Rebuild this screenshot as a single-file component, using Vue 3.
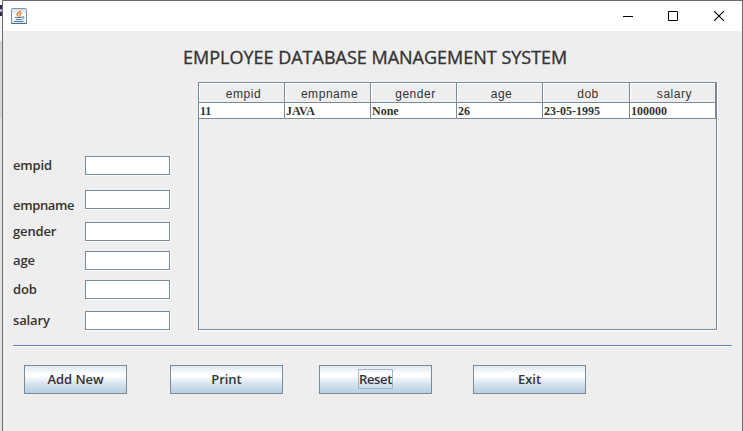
<script setup>
const columns = ['empid', 'empname', 'gender', 'age', 'dob', 'salary']
const record = ['11', 'JAVA', 'None', '26', '23-05-1995', '100000']
const buttons = ['Add New', 'Print', 'Reset', 'Exit']
</script>

<template>
  <div class="desktop">
    <div class="behind"><i class="dark"></i><i class="lilac"></i><i class="dark two"></i></div>
    <div class="window">
      <header class="titlebar">
        <svg class="java" width="16" height="16" viewBox="0 0 16 16">
          <defs>
            <linearGradient id="tile" x1="0" y1="0" x2="0" y2="1">
              <stop offset="0" stop-color="#d3dde3" />
              <stop offset=".5" stop-color="#ffffff" />
              <stop offset="1" stop-color="#dce6ec" />
            </linearGradient>
          </defs>
          <rect x=".5" y=".5" width="15" height="15" rx="1" fill="url(#tile)" stroke="#7894a6" />
          <path d="M.5 14.500v1h15v-1" fill="none" stroke="#456a82" />
          <path d="M9.500 2.400C9.800 4 6 4.700 6 6.400c0 1 1.200 1.400 1.300 2.300M10.600 4.800C8.800 5.400 8 6.200 9 7.200c.4.500.1 1-.4 1.500" fill="none" stroke="#ee8130" stroke-width="1.400" />
          <path d="M4 9.500h7M5 11.500h5.500M3 13.500h9.500" fill="none" stroke="#4f7c9b" />
          <path d="M11 8.800c2.600-.7 2.800 1.600.3 2.400" fill="none" stroke="#4f7c9b" />
        </svg>
        <div class="controls">
          <svg width="10" height="10"><path d="M0 5.500h10" stroke="#000" /></svg>
          <svg width="10" height="10"><path d="M.5.500h9v9h-9z" fill="none" stroke="#000" /></svg>
          <svg class="close" width="10" height="10"><path d="M0 0l10 10M10 0L0 10" stroke="#000" stroke-width="1.100" /></svg>
        </div>
      </header>
      <h1><span>EMPLOYEE DATABASE MANAGEMENT SYSTEM</span></h1>
      <main>
        <form class="fields" @submit.prevent>
          <template v-for="c in columns" :key="c">
            <label :for="c" :class="'l-' + c"><span>{{ c }}</span></label>
            <input :id="c" type="text" />
          </template>
        </form>
        <section class="pane">
          <div class="grid head">
            <div v-for="c in columns" :key="c" class="cell"><span>{{ c }}</span></div>
          </div>
          <div class="grid row">
            <div v-for="v in record" :key="v" class="cell"><span>{{ v }}</span></div>
          </div>
        </section>
      </main>
      <div class="rule"></div>
      <footer>
        <button v-for="b in buttons" :key="b" type="button" :class="'b-' + b.slice(0, 3).toLowerCase()"><span>{{ b }}</span></button>
      </footer>
    </div>
  </div>
</template>

<style>
body { margin: 0; overflow: hidden; }
</style>

<style scoped>
* { box-sizing: border-box; }
.desktop { display: flex; width: 743px; height: 431px; overflow: hidden; font-family: "Open Sans", "Noto Sans", sans-serif; color: #333; }
.behind { width: 2px; padding-top: 5px; background: linear-gradient(#f4f4f4 0 41px, #d2d2d2 41px 42px, #d6d6d6 42px 118px, #e4e4e4 118px); }
.behind i { display: block; width: 2px; height: 4px; }
.dark { background: #33264c; }
.behind .lilac { background: #b5b4ce; height: 3px; }
.window { width: 741px; height: 431px; border: 1px solid #6c6c6c; border-bottom: 0; background: #eee; }
.titlebar { display: flex; align-items: center; justify-content: space-between; height: 30px; padding: 0 18px 0 8px; background: #fff; }
.java { display: block; }
.controls { display: flex; gap: 35px; }
.controls svg { display: block; }
.controls .close { margin-left: 1px; }
h1 { display: flex; height: 51px; margin: 0; padding: 13px 0 0 180px; font-size: 18px; line-height: 27px; font-weight: 500; white-space: nowrap; -webkit-text-stroke: .35px #333; }
main { display: flex; height: 249px; padding-left: 10px; }
.fields { display: grid; grid-template-columns: 72px 86px; grid-template-rows: 34px 32px 29px 29px 31px 20px; width: 185px; margin: 0; padding-top: 74px; align-items: start; }
label { display: block; height: 19px; font-size: 13px; line-height: 18px; font-weight: 600; letter-spacing: -.15px; white-space: nowrap; }
.l-empname { padding-top: 6px; letter-spacing: -.35px; }
input { width: 86px; height: 20px; padding: 0; margin: 0; outline: 0; border: 0; border-radius: 0; background: #fff; box-shadow: inset -1px -1px #fff, inset 1px 1px #7a8a99, inset -2px -2px #7a8a99; }
.pane { width: 520px; height: 249px; box-shadow: inset -1px -1px #fff, inset 1px 1px #7a8a99, inset -2px -2px #7a8a99; padding: 1px 2px 0 1px; }
.grid { display: grid; grid-template-columns: 86px 86px 86px 86px 87px 86px; }
.cell { border-right: 1px solid #7a8a99; border-bottom: 1px solid #7a8a99; white-space: nowrap; }
.head .cell { height: 20px; padding-left: 4px; text-align: center; font: 12px/22px "Liberation Sans", Arial, sans-serif; letter-spacing: .55px; box-shadow: inset 1px 1px #fff; }
.row .cell { height: 16px; padding-left: 1px; background: #fff; font: bold 12px/16px "Liberation Serif", "Times New Roman", serif; }
.rule { height: 2px; margin: 14px 10px 0 10px; border-top: 1px solid #6382bf; border-bottom: 1px solid #fff; }
footer { display: flex; padding: 18px 0 0 21px; }
button { display: flex; align-items: center; justify-content: center; width: 113px; height: 29px; padding: 0 0 1px; border: 1px solid #7a8a99; border-radius: 0; background: linear-gradient(#dde8f3, #fff 30%, #fff 36%, #dae5f0 64%, #b8cfe5); color: #333; font: 600 13px/18px "Open Sans", sans-serif; letter-spacing: -.05px; white-space: nowrap; }
.b-add { width: 103px; margin-right: 43px; }
.b-pri { margin-right: 36px; }
.b-res { margin-right: 41px; }
.b-res span { display: flex; justify-content: center; width: 35px; height: 20px; border: 1px solid #a3b8cc; letter-spacing: -.3px; }
</style>
